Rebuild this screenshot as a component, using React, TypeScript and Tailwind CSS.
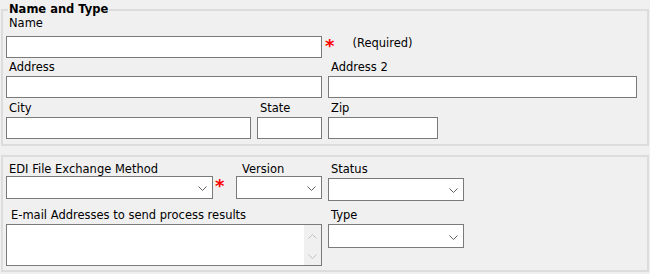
import React from "react";

function Chevron({ color = "#5f5f5f", up = false }: { color?: string; up?: boolean }) {
  return (
    <svg width="9" height="5" viewBox="0 0 9 5" className="shrink-0">
      <polyline
        points={up ? "0.5,4.5 4.5,0.5 8.5,4.5" : "0.5,0.5 4.5,4.5 8.5,0.5"}
        fill="none"
        stroke={color}
        strokeWidth="1"
      />
    </svg>
  );
}

function Select({ className }: { className: string }) {
  return (
    <div className={"bg-white border border-[#7a7a7a] flex items-center justify-end pr-[5px] pt-[2px] " + className}>
      <Chevron />
    </div>
  );
}

function Star({ className }: { className: string }) {
  return (
    <span className={"block text-[18px] leading-[18px] font-bold text-[#ff0000] " + className}>*</span>
  );
}

export default function App() {
  return (
    <div className="w-[650px] h-[274px] bg-[#f0f0f0] overflow-hidden pt-[3px] font-['DejaVu_Sans',Verdana,sans-serif] text-[11.5px] leading-[13px] text-black">
      <fieldset className="ml-[1px] w-[648px] m-0 border-2 border-[#dcdcdc] pl-[3px] pr-0 pt-0 pb-[5px]">
        <legend className="ml-[2px] px-[1px] font-bold text-[11.5px] leading-[13px]">Name and Type</legend>

        {/* Row 1 */}
        <div className="flex items-start">
          <div className="flex flex-col w-[316px]">
            <div className="h-[20px] pt-[1px] pl-[3px]">Name</div>
            <div className="h-[22px] bg-white border border-[#7a7a7a]" />
          </div>
          <Star className="mt-[21px] ml-[3px]" />
          <div className="mt-[21px] ml-[18px]">(Required)</div>
        </div>

        {/* Row 2 */}
        <div className="flex items-start gap-[6px]">
          <div className="flex flex-col w-[316px]">
            <div className="h-[18px] pt-[3px] pl-[3px]">Address</div>
            <div className="h-[22px] bg-white border border-[#7a7a7a]" />
          </div>
          <div className="flex flex-col w-[309px]">
            <div className="h-[18px] pt-[3px] pl-[3px]">Address 2</div>
            <div className="h-[22px] bg-white border border-[#7a7a7a]" />
          </div>
        </div>

        {/* Row 3 */}
        <div className="flex items-start gap-[6px]">
          <div className="flex flex-col w-[245px]">
            <div className="h-[19px] pt-[4px] pl-[3px]">City</div>
            <div className="h-[22px] bg-white border border-[#7a7a7a]" />
          </div>
          <div className="flex flex-col w-[65px]">
            <div className="h-[19px] pt-[4px] pl-[3px]">State</div>
            <div className="h-[22px] bg-white border border-[#7a7a7a]" />
          </div>
          <div className="flex flex-col w-[110px]">
            <div className="h-[19px] pt-[4px] pl-[3px]">Zip</div>
            <div className="h-[22px] bg-white border border-[#7a7a7a]" />
          </div>
        </div>
      </fieldset>

      <fieldset className="ml-[1px] mt-[9px] w-[648px] m-0 border-2 border-[#dcdcdc] pl-[3px] pr-0 pt-0 pb-[4px]">
        {/* Row 1 */}
        <div className="flex items-start">
          <div className="flex flex-col w-[207px]">
            <div className="h-[19px] pt-[6px] pl-[3px] whitespace-nowrap">EDI File Exchange Method</div>
            <Select className="h-[23px]" />
          </div>
          <div className="w-[23px] pl-[2px]">
            <Star className="mt-[20px]" />
          </div>
          <div className="flex flex-col w-[86px]">
            <div className="h-[19px] pt-[6px] pl-[6px]">Version</div>
            <Select className="h-[23px]" />
          </div>
          <div className="flex flex-col w-[136px] ml-[6px]">
            <div className="h-[21px] pt-[6px] pl-[3px]">Status</div>
            <Select className="h-[23px]" />
          </div>
        </div>

        {/* Row 2 */}
        <div className="flex items-start gap-[6px]">
          <div className="flex flex-col w-[316px]">
            <div className="h-[23px] pt-[8px] pl-[5px] whitespace-nowrap">E-mail Addresses to send process results</div>
            <div className="h-[42px] bg-white border border-[#7a7a7a] flex">
              <div className="flex-1" />
              <div className="w-[17px] bg-[#f0f0f0] flex flex-col items-center justify-between pt-[9px] pb-[6px]">
                <Chevron color="#c2c2c2" up />
                <Chevron color="#c2c2c2" />
              </div>
            </div>
          </div>
          <div className="flex flex-col w-[136px]">
            <div className="h-[23px] pt-[8px] pl-[3px]">Type</div>
            <Select className="h-[24px]" />
          </div>
        </div>
      </fieldset>
    </div>
  );
}
